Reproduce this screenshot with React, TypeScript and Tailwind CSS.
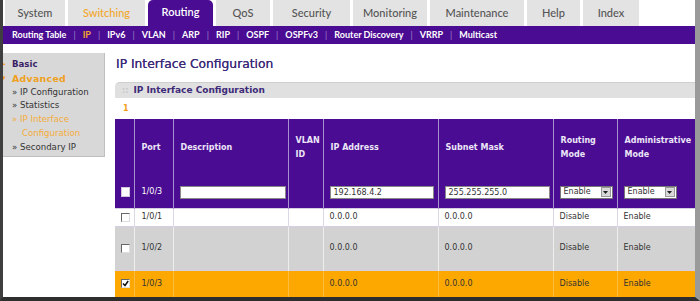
import React from 'react';

type Tab = { label: string; cls: string; text: string };

const tabs: Tab[] = [
    { label: 'System', cls: 'w-[60px] bg-[#e3e3e3]', text: 'text-[#555]' },
    { label: 'Switching', cls: 'w-[77px] bg-[#e3e3e3]', text: 'text-[#f2a72a]' },
    { label: 'Routing', cls: 'w-[65px] bg-[#4a0c92] rounded-t-[5px] mt-[2px]', text: 'text-white' },
    { label: 'QoS', cls: 'w-[54px] bg-[#e3e3e3]', text: 'text-[#555]' },
    { label: 'Security', cls: 'w-[77px] bg-[#e3e3e3]', text: 'text-[#555]' },
    { label: 'Monitoring', cls: 'w-[74px] bg-[#e3e3e3]', text: 'text-[#555]' },
    { label: 'Maintenance', cls: 'w-[94px] bg-[#e3e3e3]', text: 'text-[#555]' },
    { label: 'Help', cls: 'w-[53px] bg-[#e3e3e3]', text: 'text-[#555]' },
    { label: 'Index', cls: 'w-[56px] bg-[#e3e3e3]', text: 'text-[#555]' }
];

const subnav = ['Routing Table', 'IP', 'IPv6', 'VLAN', 'ARP', 'RIP', 'OSPF', 'OSPFv3', 'Router Discovery', 'VRRP', 'Multicast'];

type Row = { port: string; bg: string; line: string; h: string; checked: boolean };

const rows: Row[] = [
    { port: '1/0/1', bg: 'bg-white', line: 'border-[#ddd8e6]', h: 'h-[18px]', checked: false },
    { port: '1/0/2', bg: 'bg-[#d2d2d2]', line: 'border-[#eeeeee]', h: 'h-[44px]', checked: false },
    { port: '1/0/3', bg: 'bg-[#fda800]', line: 'border-[#fdbb40]', h: 'h-[27px]', checked: true }
];

function Checkbox({ checked, light }: { checked?: boolean; light?: boolean }) {
    if (light) {
        return <div className="w-[9px] h-[10px] bg-white border border-[#cfc8dc] ml-[6px]"></div>;
    }
    return (
        <div className="w-[9px] h-[9px] bg-white border border-t-[#666] border-l-[#666] border-r-[#ddd] border-b-[#ddd] ml-[6px] flex items-center justify-center">
            {checked && (
                <svg width="7" height="7" viewBox="0 0 7 7">
                    <path d="M1 3.5 L3 5.5 L6.2 1" stroke="#111" strokeWidth="1.5" fill="none" />
                </svg>
            )}
        </div>
    );
}

function FakeSelect({ w }: { w: string }) {
    return (
        <div className={`${w} h-[13px] bg-white border border-[#777] flex items-center justify-between text-[8px] text-[#333] pl-[3px]`}>
            <span>Enable</span>
            <span className="w-[10px] h-[10px] bg-[#d8d8d8] border border-[#999] mr-[1px] flex items-center justify-center">
                <svg width="5" height="3" viewBox="0 0 5 3">
                    <path d="M0 0 L5 0 L2.5 3 Z" fill="#222" />
                </svg>
            </span>
        </div>
    );
}

export default function App() {
    const th = 'border-r border-[#a991d0] text-left align-middle pl-[7px] font-bold text-[8px] text-[#ece6f8] leading-[14px]';
    return (
        <div className="w-[700px] h-[301px] overflow-hidden bg-white border-l-[3px] border-l-[#3f3f3f] border-r-[5px] border-r-[#9a9a9a] border-b-[4px] border-b-[#2e2e2e] flex flex-col" style={{ fontFamily: '"DejaVu Sans", Verdana, sans-serif' }}>
            {/* top tabs */}
            <div className="h-[26px] flex items-end gap-[3px] pl-[2px] shrink-0" style={{ fontFamily: 'Lato, "Open Sans", sans-serif' }}>
                {tabs.map((t) => (
                    <div key={t.label} className={`${t.cls} h-full flex items-center justify-center text-[11px] ${t.text}`} >
                        <span className={t.label === 'Routing' ? 'mt-[-2px] font-semibold' : 'font-medium'}>{t.label}</span>
                    </div>
                ))}
            </div>

            {/* sub navigation */}
            <div className="h-[18px] bg-[#4a0c92] flex items-center pl-[9px] text-[9px] font-bold text-white shrink-0" style={{ fontFamily: 'Lato, "Open Sans", sans-serif' }}>
                {subnav.map((s, i) => (
                    <React.Fragment key={s}>
                        {i > 0 && <span className="px-[7px] text-[#9c83c8] font-normal">|</span>}
                        <span className={s === 'IP' ? 'text-[#f4a62a]' : 'text-white'}>{s}</span>
                    </React.Fragment>
                ))}
            </div>

            <div className="flex flex-1 pt-[9px] min-h-0">
                {/* left menu */}
                <div className="w-[102px] h-[104px] bg-[#d8d8d8] border-r border-b border-[#c0c0c0] shrink-0 pt-[5px] text-[8.6px] leading-[13.8px] relative">
                    <div className="flex items-center">
                        <span className="absolute left-[-1px] text-[#f0a020] text-[7px]">▸</span>
                        <span className="pl-[9px] font-bold text-[#3a1f66]">Basic</span>
                    </div>
                    <div className="flex items-center">
                        <span className="absolute left-[-1px] text-[#f0a020] text-[7px]">▾</span>
                        <span className="pl-[9px] font-bold text-[#f0a020] text-[9.4px] tracking-[0.3px]">Advanced</span>
                    </div>
                    <div className="pl-[9px] text-[#333]">» IP Configuration</div>
                    <div className="pl-[9px] text-[#333]">» Statistics</div>
                    <div className="pl-[9px] text-[#f4ac3a]">» IP Interface</div>
                    <div className="pl-[19px] text-[#f4ac3a]">Configuration</div>
                    <div className="pl-[9px] text-[#333]">» Secondary IP</div>
                </div>

                {/* main content */}
                <div className="ml-[10px] pt-[1px] flex-1 min-w-0 overflow-hidden">
                    <h1 className="text-[12.3px] font-normal text-[#3d2a78] leading-[18px] pl-[1px] pt-[1px] [text-shadow:0_0_0.3px_#3d2a78]">IP Interface Configuration</h1>

                    <div className="mt-[9px] h-[16px] bg-[#e0e0e0] rounded-tl-[5px] flex items-center pl-[7px] border-t border-[#cfcfcf]">
                        <span className="text-[#c8c8c8] text-[8px] font-bold mr-[5px]">::</span>
                        <span className="text-[9px] font-bold text-[#3d2a78]">IP Interface Configuration</span>
                    </div>
                    <div className="h-[21px] flex items-center pl-[8px] text-[8px] text-[#f0a020] font-bold">1</div>

                    <table className="table-fixed border-collapse w-[592px]">
                        <colgroup>
                            <col className="w-[19px]" />
                            <col className="w-[39px]" />
                            <col className="w-[115px]" />
                            <col className="w-[35px]" />
                            <col className="w-[115px]" />
                            <col className="w-[115px]" />
                            <col className="w-[64px]" />
                            <col className="w-[90px]" />
                        </colgroup>
                        <thead>
                            <tr className="h-[58px] bg-[#4a0c92]">
                                <th className={th}></th>
                                <th className={th}>Port</th>
                                <th className={th}>Description</th>
                                <th className={th}>VLAN<br />ID</th>
                                <th className={th}>IP Address</th>
                                <th className={th}>Subnet Mask</th>
                                <th className={th}>Routing<br />Mode</th>
                                <th className={th}>Administrative<br />Mode</th>
                            </tr>
                        </thead>
                        <tbody>
                            <tr className="h-[31px] bg-[#4a0c92] text-[8px] text-white">
                                <td className="border-r border-[#a991d0]"><Checkbox light /></td>
                                <td className="border-r border-[#a991d0] pl-[7px]">1/0/3</td>
                                <td className="border-r border-[#a991d0] pl-[6px]"><div className="w-[106px] h-[13px] bg-white border border-[#888]"></div></td>
                                <td className="border-r border-[#a991d0]"></td>
                                <td className="border-r border-[#a991d0] pl-[6px]"><div className="w-[104px] h-[13px] bg-white border border-[#888] text-[#333] pl-[3px] leading-[11px]">192.168.4.2</div></td>
                                <td className="border-r border-[#a991d0] pl-[6px]"><div className="w-[105px] h-[13px] bg-white border border-[#888] text-[#333] pl-[3px] leading-[11px]">255.255.255.0</div></td>
                                <td className="border-r border-[#a991d0] pl-[6px]"><FakeSelect w="w-[53px]" /></td>
                                <td className="border-r border-[#a991d0] pl-[6px]"><FakeSelect w="w-[53px]" /></td>
                            </tr>
                            {rows.map((r) => (
                                <tr key={r.port} className={`${r.h} ${r.bg} text-[8px] text-[#333] border-t border-[#d6cfe4]`}>
                                    <td className={`border-r ${r.line}`}><Checkbox checked={r.checked} /></td>
                                    <td className={`border-r ${r.line} pl-[7px]`}>{r.port}</td>
                                    <td className={`border-r ${r.line}`}></td>
                                    <td className={`border-r ${r.line}`}></td>
                                    <td className={`border-r ${r.line} pl-[6px]`}>0.0.0.0</td>
                                    <td className={`border-r ${r.line} pl-[6px]`}>0.0.0.0</td>
                                    <td className={`border-r ${r.line} pl-[6px]`}>Disable</td>
                                    <td className={`border-r ${r.line} pl-[6px]`}>Enable</td>
                                </tr>
                            ))}
                        </tbody>
                    </table>
                </div>
            </div>
        </div>
    );
}
